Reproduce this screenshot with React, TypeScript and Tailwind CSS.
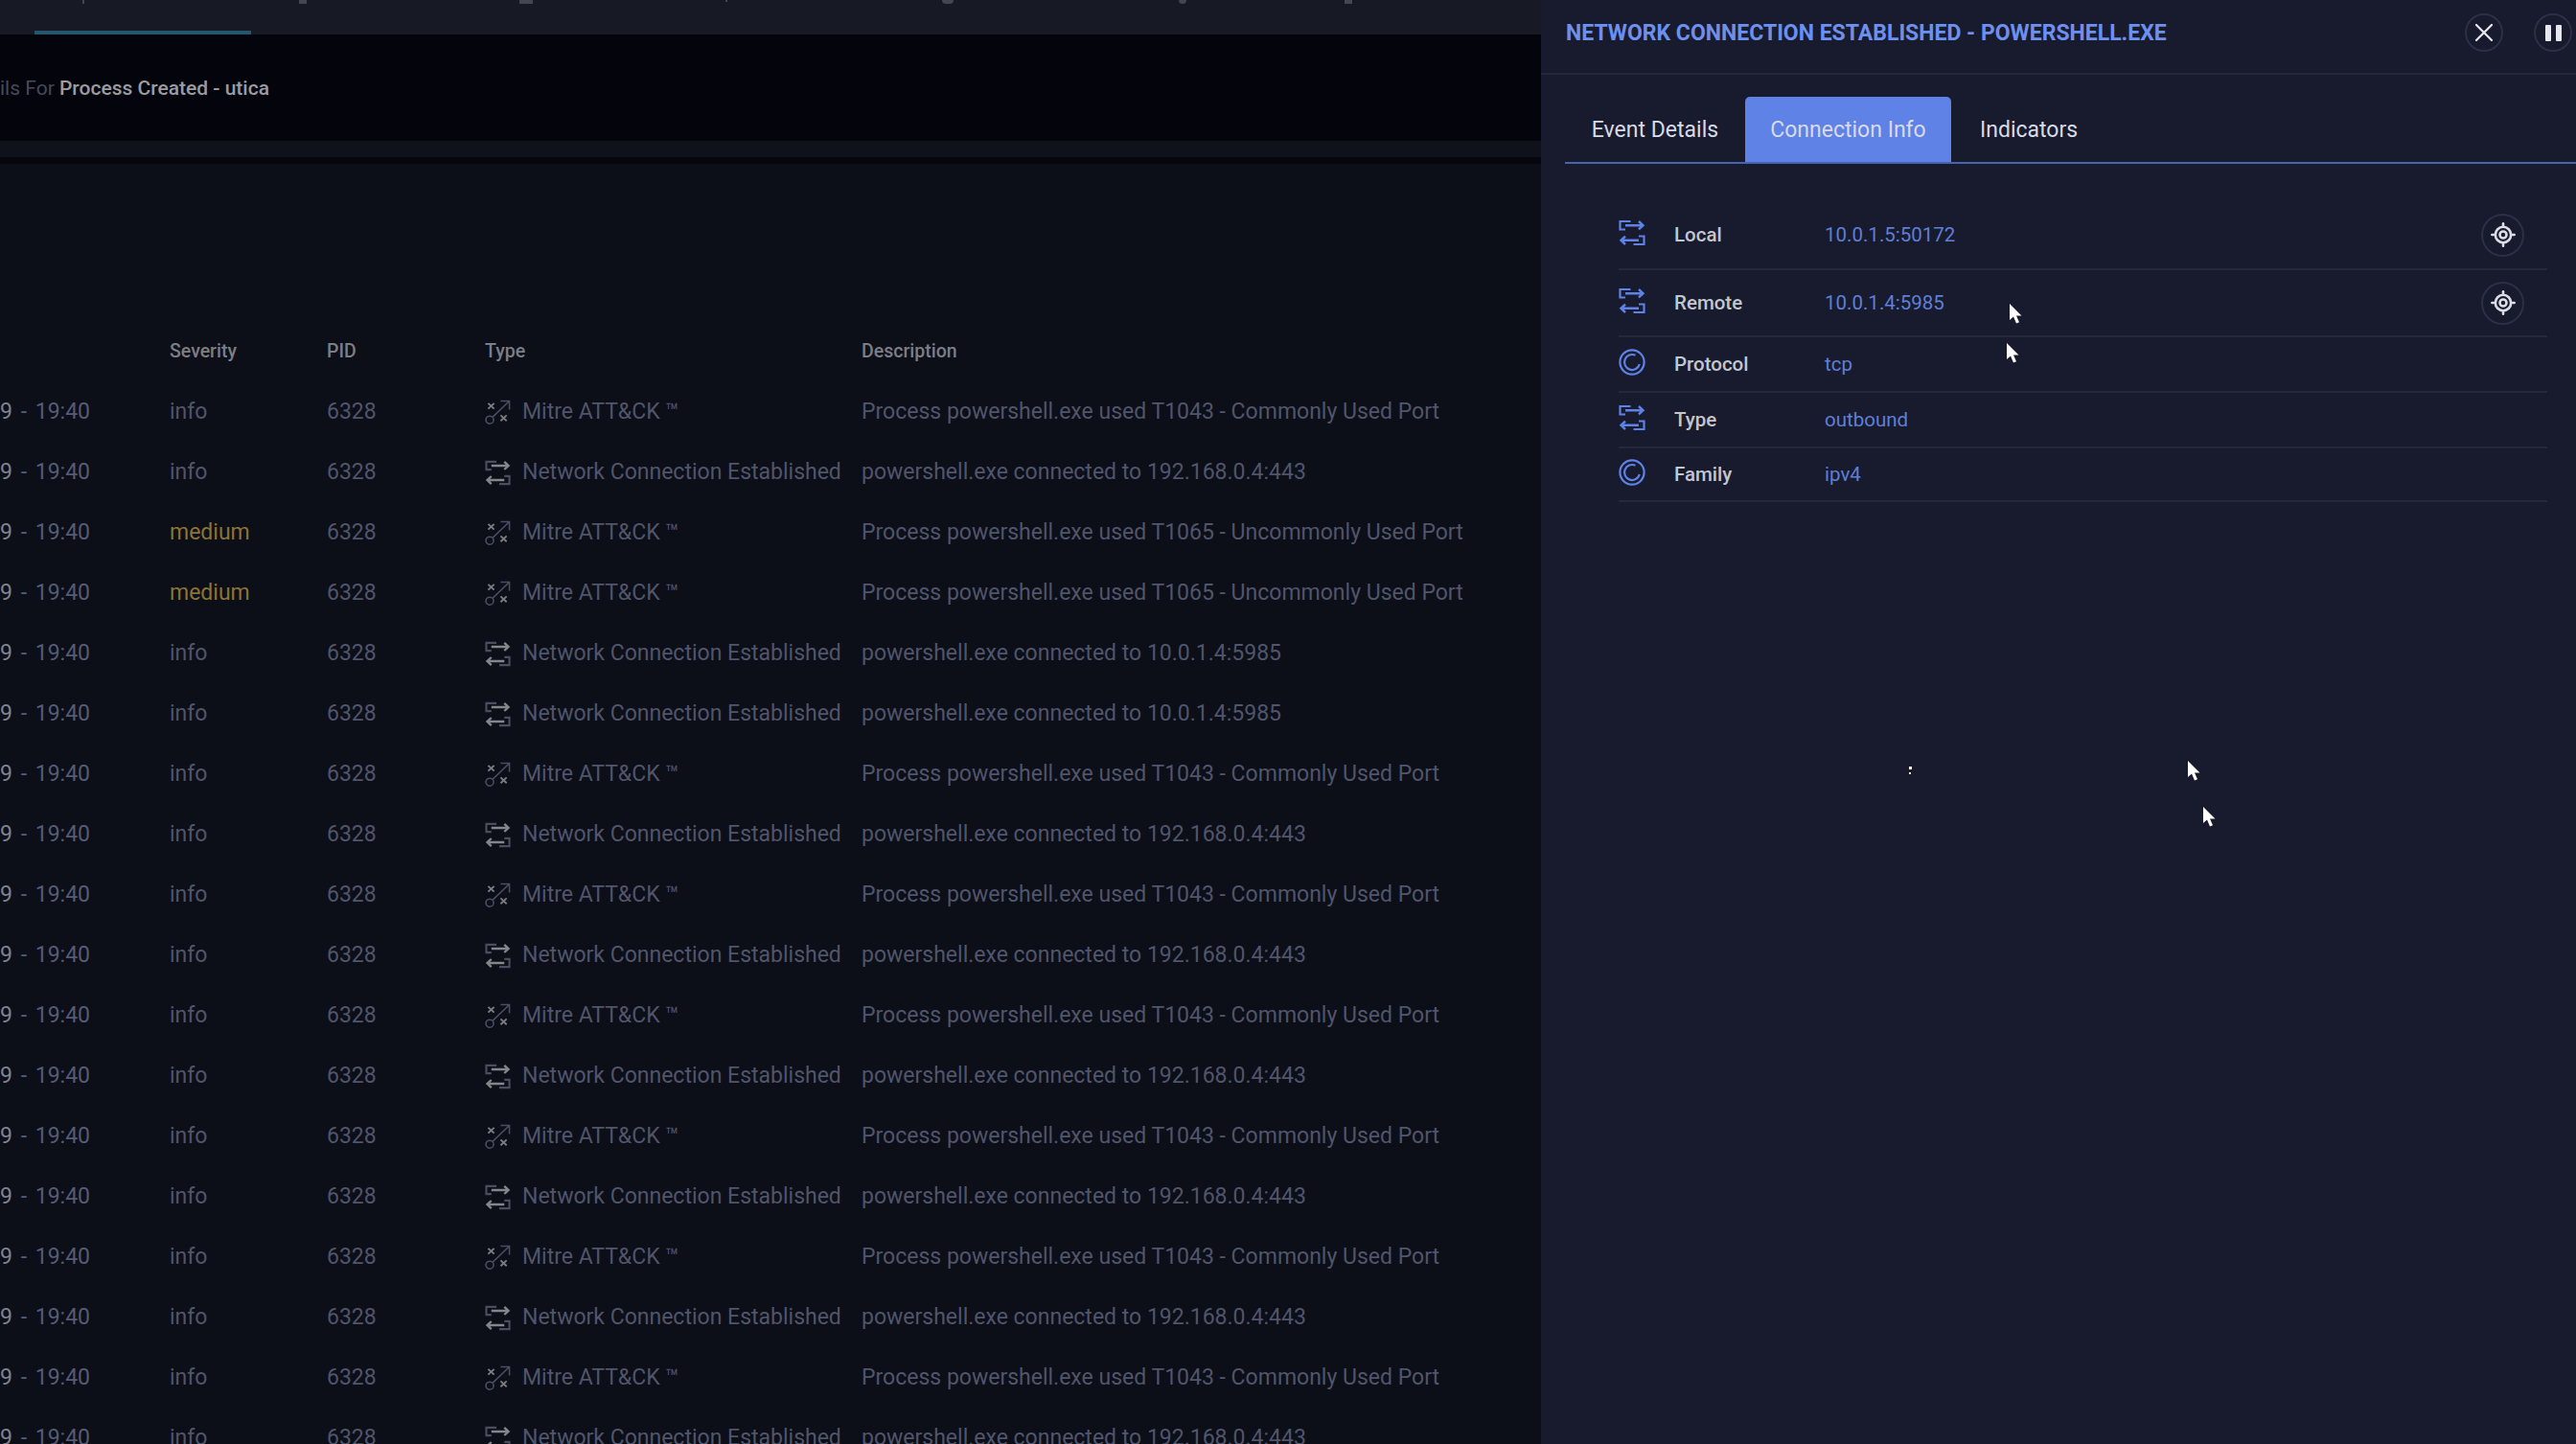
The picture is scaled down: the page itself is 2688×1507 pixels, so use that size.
import { LocateFixed, X } from 'lucide-react'

type EventRow = {
  severity: 'info' | 'medium'
  kind: 'mitre' | 'net'
  description: string
}

const T1043 = 'Process powershell.exe used T1043 - Commonly Used Port'
const T1065 = 'Process powershell.exe used T1065 - Uncommonly Used Port'
const TO_443 = 'powershell.exe connected to 192.168.0.4:443'
const TO_5985 = 'powershell.exe connected to 10.0.1.4:5985'

const ROWS: EventRow[] = [
  { severity: 'info', kind: 'mitre', description: T1043 },
  { severity: 'info', kind: 'net', description: TO_443 },
  { severity: 'medium', kind: 'mitre', description: T1065 },
  { severity: 'medium', kind: 'mitre', description: T1065 },
  { severity: 'info', kind: 'net', description: TO_5985 },
  { severity: 'info', kind: 'net', description: TO_5985 },
  { severity: 'info', kind: 'mitre', description: T1043 },
  { severity: 'info', kind: 'net', description: TO_443 },
  { severity: 'info', kind: 'mitre', description: T1043 },
  { severity: 'info', kind: 'net', description: TO_443 },
  { severity: 'info', kind: 'mitre', description: T1043 },
  { severity: 'info', kind: 'net', description: TO_443 },
  { severity: 'info', kind: 'mitre', description: T1043 },
  { severity: 'info', kind: 'net', description: TO_443 },
  { severity: 'info', kind: 'mitre', description: T1043 },
  { severity: 'info', kind: 'net', description: TO_443 },
  { severity: 'info', kind: 'mitre', description: T1043 },
  { severity: 'info', kind: 'net', description: TO_443 },
]

const CONNECTION = [
  { label: 'Local', value: '10.0.1.5:50172', icon: 'net', rowClass: 'h-[72px]', locate: true },
  { label: 'Remote', value: '10.0.1.4:5985', icon: 'net', rowClass: 'h-[70px]', locate: true },
  { label: 'Protocol', value: 'tcp', icon: 'ring', rowClass: 'h-[58px]', locate: false },
  { label: 'Type', value: 'outbound', icon: 'net', rowClass: 'h-[58px]', locate: false },
  { label: 'Family', value: 'ipv4', icon: 'ring', rowClass: 'h-[56px]', locate: false },
]

function NetIcon({ className, arrowClass }: { className?: string; arrowClass?: string }) {
  return (
    <svg viewBox="0 0 28 28" fill="none" stroke="currentColor" strokeWidth="2.2" className={className}>
      <path d="M12.5 2H1.5V10.5H7" />
      <path d="M15.5 26H26.5V17.5H21" />
      <g className={arrowClass} strokeWidth="2.4">
        <path d="M7 6.2H25.5M21 2L25.5 6.2L21 10.4" />
        <path d="M21 21.8H2.5M7 17.6L2.5 21.8L7 26" />
      </g>
    </svg>
  )
}

function RingIcon({ className }: { className?: string }) {
  return (
    <svg viewBox="0 0 28 28" fill="none" stroke="currentColor" strokeWidth="2.2" className={className}>
      <circle cx="14" cy="14" r="12.6" />
      <path d="M17.5 6.8A8 8 0 1 0 21.8 16" />
    </svg>
  )
}

function MitreIcon({ className }: { className?: string }) {
  return (
    <svg viewBox="0 0 28 28" fill="none" stroke="currentColor" strokeWidth="1.6" className={className}>
      <circle cx="5.2" cy="22" r="4.2" />
      <path d="M8.5 18.8L26.5 1.5M17 1.5H26.5V11" />
      <g className="text-[#7c7d84]" strokeWidth="2">
        <path d="M3.5 4L10 10M10 4L3.5 10" />
        <path d="M17 17L23.5 23M23.5 17L17 23" />
      </g>
    </svg>
  )
}

function Cursor({ className }: { className: string }) {
  return (
    <svg viewBox="0 0 14 22" className={`absolute w-[14px] h-[22px] ${className}`}>
      <path d="M0 0V17L4 13.4L7 20.5L10 19.3L7 12.5H12.5Z" fill="#fff" />
    </svg>
  )
}

export default function App() {
  return (
    <div className="relative flex h-[1507px] w-[2688px] overflow-hidden bg-[#0c0e18] font-[Roboto,sans-serif]">
      <div className="flex w-[1608px] shrink-0 flex-col">
        <div className="relative h-9 shrink-0 bg-[#171925]">
          <div className="flex h-1 items-start">
            <span className="ml-[86px] h-1 w-0.5 bg-[#45464f]" />
            <span className="ml-[224px] h-1 w-2 bg-[#45464f]" />
            <span className="ml-[222px] h-1 w-3.5 bg-[#45464f]" />
            <span className="ml-[201px] h-0.5 w-0.5 bg-[#45464f]" />
            <span className="ml-[224px] h-1 w-3 rounded-b-full bg-[#45464f]" />
            <span className="ml-[235px] h-1 w-2 rounded-b-full bg-[#45464f]" />
            <span className="ml-[165px] h-1 w-2 bg-[#45464f]" />
          </div>
          <div className="absolute bottom-0 left-9 h-1 w-[226px] bg-[#24566e]" />
        </div>

        <div className="flex h-[111px] shrink-0 items-start bg-[#04040c] pt-[108px]">
          <div className="-mt-[67px] whitespace-nowrap text-[21px] leading-[30px] text-[#464a5c]">
            ils For <span className="font-medium text-[#9b9ca1]">Process Created - utica</span>
          </div>
        </div>
        <div className="h-[17px] shrink-0 bg-[#10121b]" />
        <div className="h-[7px] shrink-0 bg-[#06070e]" />

        <div className="pt-[164px]">
          <div className="grid h-[64px] grid-cols-[177px_164px_165px_393px_1fr] items-center text-[19.5px] font-medium text-[#7c7e85]">
            <span />
            <span>Severity</span>
            <span>PID</span>
            <span>Type</span>
            <span>Description</span>
          </div>
          {ROWS.map((row, i) => (
            <div
              key={i}
              className="grid h-[63px] grid-cols-[177px_164px_165px_393px_1fr] items-center whitespace-nowrap text-[23px] text-[#50556b]"
            >
              <span className="[word-spacing:3px]">
                <span className="text-[#80838f]">9</span>
                <span className="text-[#565b75]"> - 19:40</span>
              </span>
              <span className={row.severity === 'medium' ? 'text-[#8b7434]' : ''}>{row.severity}</span>
              <span>6328</span>
              <span className="flex items-center gap-[12px]">
                {row.kind === 'mitre' ? (
                  <MitreIcon className="h-[27px] w-[27px] shrink-0 text-[#4b4e63]" />
                ) : (
                  <NetIcon className="h-[27px] w-[27px] shrink-0 text-[#4b4e60]" arrowClass="text-[#85868c]" />
                )}
                {row.kind === 'mitre' ? 'Mitre ATT&CK ™' : 'Network Connection Established'}
              </span>
              <span>{row.description}</span>
            </div>
          ))}
        </div>
      </div>

      <div className="flex min-w-0 flex-1 flex-col bg-[#181b2e]">
        <div className="flex h-[78px] shrink-0 items-center justify-between border-b-2 border-[#25283c] pl-[26px] pr-1">
          <h1 className="-mt-[6px] whitespace-nowrap text-[23px] font-bold uppercase text-[#6d90f0]">
            Network Connection Established - powershell.exe
          </h1>
          <div className="-mt-2 flex items-center gap-[32px]">
            <button className="flex h-10 w-10 items-center justify-center rounded-full border-2 border-[#2c2f45] text-[#e6e6ee]">
              <X size={32} strokeWidth={1.7} />
            </button>
            <button className="flex h-10 w-10 items-center justify-center gap-[5px] rounded-full border-2 border-[#2c2f45]">
              <span className="h-[17px] w-[6px] rounded-[1px] bg-[#e6e6ee]" />
              <span className="h-[17px] w-[6px] rounded-[1px] bg-[#e6e6ee]" />
            </button>
          </div>
        </div>

        <div className="ml-[25px] mt-[23px] flex h-[70px] shrink-0 items-stretch border-b-2 border-[#4a63ad] text-[23px] text-[#d8dae8]">
          <div className="flex w-[188px] items-center justify-center pt-[2px]">Event Details</div>
          <div className="flex w-[215px] items-center justify-center rounded-t-[5px] bg-[#5f82e6] pt-[2px]">Connection Info</div>
          <div className="flex items-center px-[30px] pt-[2px]">Indicators</div>
        </div>

        <div className="ml-[81px] mt-[39px] w-[969px]">
          {CONNECTION.map((item) => (
            <div key={item.label} className={`flex items-center border-b-2 border-[#25283c] ${item.rowClass}`}>
              {item.icon === 'net' ? (
                <NetIcon className="-mt-1 h-7 w-7 shrink-0 text-[#5f82e6]" />
              ) : (
                <RingIcon className="-mt-1 h-7 w-7 shrink-0 text-[#5f82e6]" />
              )}
              <span className="ml-[30px] w-[157px] shrink-0 text-[20.5px] font-medium text-[#c4c6cf]">{item.label}</span>
              <span className="text-[20.5px] text-[#5f7fd6]">{item.value}</span>
              {item.locate && (
                <button className="ml-auto mr-[24px] flex h-[45px] w-[45px] items-center justify-center rounded-full border-2 border-[#2c2f45] text-[#dcdde6]">
                  <LocateFixed size={28} strokeWidth={2.2} />
                </button>
              )}
            </div>
          ))}
        </div>
      </div>

      <Cursor className="left-[2097px] top-[317px]" />
      <Cursor className="left-[2094px] top-[358px]" />
      <Cursor className="left-[2283px] top-[794px]" />
      <Cursor className="left-[2299px] top-[842px]" />
      <span className="absolute left-[1992px] top-[800px] h-[3px] w-[3px] bg-white" />
      <span className="absolute left-[1992px] top-[806px] h-0.5 w-0.5 bg-white" />
    </div>
  )
}
